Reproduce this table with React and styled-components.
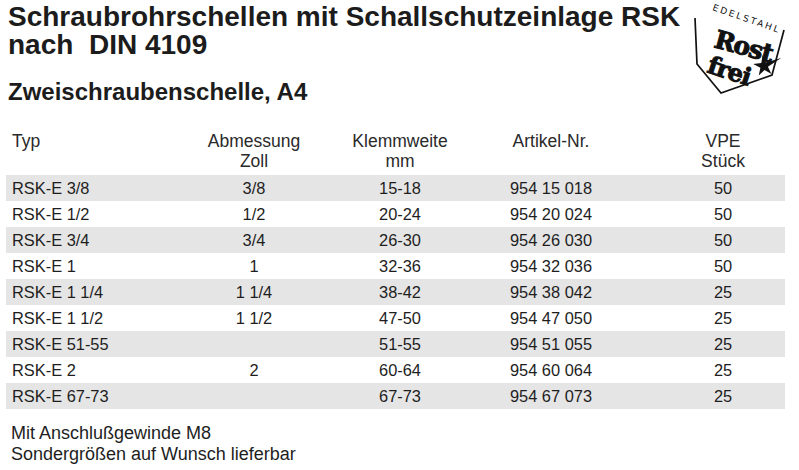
import React from "react";
import styled, { createGlobalStyle } from "styled-components";

const Global = createGlobalStyle`
  html, body { margin: 0; padding: 0; background: #ffffff; }
  body { font-family: "Liberation Sans", Arial, Helvetica, sans-serif; color: #1e1e1e; }
`;

const Page = styled.div`
  width: 799px;
  height: 470px;
  overflow: hidden;
  box-sizing: border-box;
`;

const Top = styled.header`
  display: flex;
  justify-content: space-between;
  align-items: flex-start;
  padding: 3px 4px 0 8px;
`;

const Headings = styled.div`
  display: flex;
  flex-direction: column;
`;

const Title = styled.h1`
  margin: 0;
  font-size: 28px;
  line-height: 28px;
  font-weight: 700;
  color: #1c1c1c;
  white-space: pre;
`;

const Subtitle = styled.h2`
  margin: 18.5px 0 0;
  font-size: 24px;
  line-height: 28px;
  font-weight: 700;
  color: #1c1c1c;
`;

const Logo = styled.svg`
  flex: none;
  margin-top: -3px;
  width: 108px;
  height: 98px;
`;

const Table = styled.div`
  margin: 25px 0 0 6px;
  width: 779px;
`;

const Grid = styled.div`
  display: grid;
  grid-template-columns: 174px 148px 144px 158px 155px;
`;

const HeadRow = styled(Grid)`
  font-size: 17.5px;
  line-height: 20px;
  color: #2a2a2a;
  margin-bottom: 4px;
`;

const Row = styled(Grid)`
  height: 26px;
  font-size: 16.4px;
  line-height: 27px;
  color: #1e1e1e;
  background: ${(p) => (p.$shade ? "#e5e5e5" : "transparent")};
`;

const Cell = styled.div`
  text-align: center;
  white-space: nowrap;
  &:first-child {
    text-align: left;
    padding-left: 6px;
  }
  &:last-child {
    padding-left: 31px;
  }
`;

const Notes = styled.footer`
  margin-top: 14px;
  padding-left: 11px;
  font-size: 18px;
  line-height: 21px;
  color: #1e1e1e;
`;

const rows = [
  ["RSK-E 3/8", "3/8", "15-18", "954 15 018", "50"],
  ["RSK-E 1/2", "1/2", "20-24", "954 20 024", "50"],
  ["RSK-E 3/4", "3/4", "26-30", "954 26 030", "50"],
  ["RSK-E 1", "1", "32-36", "954 32 036", "50"],
  ["RSK-E 1 1/4", "1 1/4", "38-42", "954 38 042", "25"],
  ["RSK-E 1 1/2", "1 1/2", "47-50", "954 47 050", "25"],
  ["RSK-E 51-55", "", "51-55", "954 51 055", "25"],
  ["RSK-E 2", "2", "60-64", "954 60 064", "25"],
  ["RSK-E 67-73", "", "67-73", "954 67 073", "25"],
];

function starPoints(cx, cy, radii, rot) {
  const pts = [];
  for (let i = 0; i < 10; i++) {
    const r = radii[i];
    const a = ((rot + i * 36) * Math.PI) / 180;
    pts.push(`${(cx + r * Math.cos(a)).toFixed(1)},${(cy + r * Math.sin(a)).toFixed(1)}`);
  }
  return pts.join(" ");
}

function RostFreiLogo() {
  return (
    <Logo viewBox="0 0 108 98">
      <path
        d="M8 18 L10 64 L34 93 L85 75 L97 30"
        fill="none"
        stroke="#111"
        strokeWidth="1.7"
        strokeLinejoin="miter"
      />
      <text
        x="25"
        y="10"
        transform="rotate(19 25 10)"
        fontFamily="'DejaVu Sans', sans-serif"
        fontSize="9"
        letterSpacing="2.2"
        fill="#111"
      >
        EDELSTAHL
      </text>
      <text
        x="26"
        y="47"
        transform="rotate(15 26 47)"
        fontFamily="'DejaVu Serif', serif"
        fontWeight="900"
        fontSize="25"
        letterSpacing="-1"
        fill="#111"
        stroke="#111"
        strokeWidth="1"
      >
        Rost
      </text>
      <text
        x="19"
        y="72"
        transform="rotate(18 19 72)"
        fontFamily="'DejaVu Serif', serif"
        fontWeight="900"
        fontSize="24"
        letterSpacing="-1"
        fill="#111"
        stroke="#111"
        strokeWidth="1"
      >
        frei
      </text>
      <polygon
        points={starPoints(77, 66, [19, 4, 11, 4, 11, 4, 11, 4, 11, 4], -25)}
        fill="#111"
      />
    </Logo>
  );
}

export default function App() {
  return (
    <Page>
      <Global />
      <Top>
        <Headings>
          <Title>{"Schraubrohrschellen mit Schallschutzeinlage RSK\nnach  DIN 4109"}</Title>
          <Subtitle>Zweischraubenschelle, A4</Subtitle>
        </Headings>
        <RostFreiLogo />
      </Top>
      <Table>
        <HeadRow>
          <Cell>Typ</Cell>
          <Cell>
            Abmessung
            <br />
            Zoll
          </Cell>
          <Cell>
            Klemmweite
            <br />
            mm
          </Cell>
          <Cell>Artikel-Nr.</Cell>
          <Cell>
            VPE
            <br />
            Stück
          </Cell>
        </HeadRow>
        {rows.map((r, i) => (
          <Row key={r[0]} $shade={i % 2 === 0}>
            {r.map((c, j) => (
              <Cell key={j}>{c}</Cell>
            ))}
          </Row>
        ))}
      </Table>
      <Notes>
        Mit Anschlußgewinde M8
        <br />
        Sondergrößen auf Wunsch lieferbar
      </Notes>
    </Page>
  );
}
